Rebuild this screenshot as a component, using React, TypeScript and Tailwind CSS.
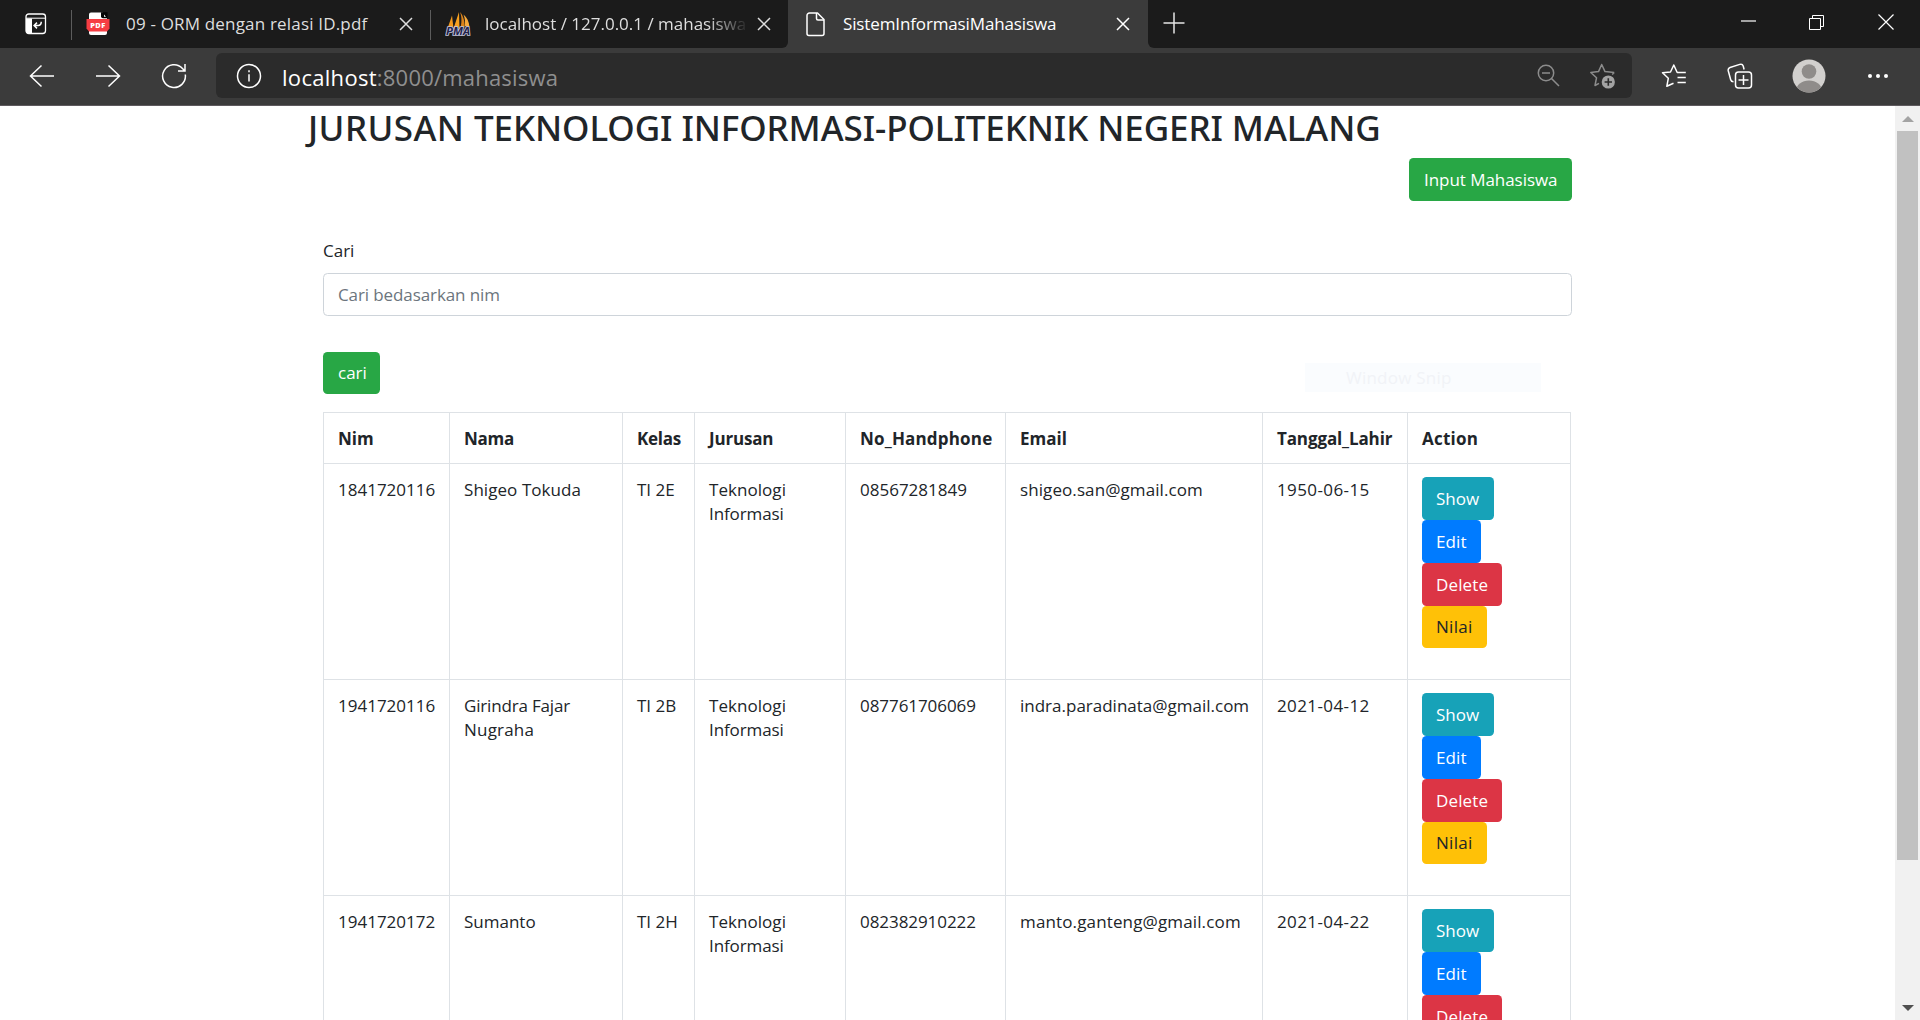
import type { ReactNode } from "react";

type Text = { text: string; track?: string };
type Student = {
  nim: Text;
  name: Text[];
  kelas: Text;
  phone: Text;
  email: Text;
  born: Text;
};

const students: Student[] = [
  {
    nim: { text: "1841720116" },
    name: [{ text: "Shigeo Tokuda", track: "tracking-[0.06px]" }],
    kelas: { text: "TI 2E" },
    phone: { text: "08567281849" },
    email: { text: "shigeo.san@gmail.com", track: "tracking-[0.09px]" },
    born: { text: "1950-06-15", track: "tracking-[0.4px]" },
  },
  {
    nim: { text: "1941720116" },
    name: [
      { text: "Girindra Fajar", track: "tracking-[-0.18px]" },
      { text: "Nugraha", track: "tracking-[0.2px]" },
    ],
    kelas: { text: "TI 2B" },
    phone: { text: "087761706069", track: "tracking-[-0.06px]" },
    email: { text: "indra.paradinata@gmail.com" },
    born: { text: "2021-04-12", track: "tracking-[0.4px]" },
  },
  {
    nim: { text: "1941720172" },
    name: [{ text: "Sumanto" }],
    kelas: { text: "TI 2H" },
    phone: { text: "082382910222", track: "tracking-[-0.06px]" },
    email: { text: "manto.ganteng@gmail.com", track: "tracking-[0.14px]" },
    born: { text: "2021-04-22", track: "tracking-[0.4px]" },
  },
];

const columns = [
  { label: "Nim", width: "w-[126px]", track: "" },
  { label: "Nama", width: "w-[173px]", track: "tracking-[-0.3px]" },
  { label: "Kelas", width: "w-[72px]", track: "tracking-[-0.25px]" },
  { label: "Jurusan", width: "w-[151px]", track: "tracking-[-0.2px]" },
  { label: "No_Handphone", width: "w-[160px]", track: "tracking-[0.18px]" },
  { label: "Email", width: "w-[257px]", track: "" },
  { label: "Tanggal_Lahir", width: "w-[145px]", track: "tracking-[-0.12px]" },
  { label: "Action", width: "w-[163px]", track: "tracking-[0.22px]" },
];

function CloseIcon({ className = "" }: { className?: string }) {
  return (
    <svg className={`size-[14px] shrink-0 ${className}`} viewBox="0 0 14 14" fill="none" stroke="currentColor" strokeWidth="1.5">
      <path d="M1 1l12 12M13 1L1 13" />
    </svg>
  );
}

function TabActionsIcon() {
  return (
    <svg className="size-[22px]" viewBox="0 0 22 22" fill="none">
      <rect x="1" y="1" width="19.5" height="19.5" rx="2.8" stroke="#fff" strokeWidth="1.3" />
      <path d="M1 5.200h19.500" stroke="#fff" strokeWidth="1" />
      <path d="M1 5.500h6v15H3.500A2.500 2.500 0 0 1 1 18z" fill="#fff" />
      <path d="M16.200 8.800v.7a3 3 0 0 1-3 3H9.500M12 9.600l-2.900 2.900 2.900 2.900" stroke="#fff" strokeWidth="1.500" />
    </svg>
  );
}

function PdfIcon() {
  return (
    <svg className="h-6 w-[24px] shrink-0" viewBox="0 0 24 24">
      <path d="M3 2.500A2 2 0 0 1 5 .5h11.500l4.500 5V21a2 2 0 0 1-2 2H5a2 2 0 0 1-2-2z" fill="#fff" />
      <path d="M15 .2h6.500v6H17a2 2 0 0 1-2-2z" fill="#050505" />
      <path d="M18 2.600l2 2.200h-2z" fill="#fff" />
      <path d="M.5 7h23v9.500L21 19.500H3L.5 16.500z" fill="#f63d43" />
      <text x="12" y="15.600" textAnchor="middle" fill="#fff" fontSize="7.400" fontWeight="800" letterSpacing="0.500" fontFamily="Open Sans, sans-serif">
        PDF
      </text>
    </svg>
  );
}

function PmaIcon() {
  return (
    <svg className="size-[26px] shrink-0" viewBox="0 0 26 26">
      <path d="M7 4.500L2.500 17.500h6z" fill="#f39a1e" />
      <path d="M14 1L8.500 17.500h6z" fill="#f8a11f" />
      <path d="M15 1c1.500 4 2 8 .8 14.800l3.700.7C20 11 18.500 5 15 1z" fill="#d9821a" />
      <path d="M18.500 3.500c3.500 3 5.500 7 6 12.500L19.800 15c.6-4 .2-7.500-1.300-11.500z" fill="#f6a93b" />
      <text
        x="13"
        y="24"
        textAnchor="middle"
        textLength="24"
        lengthAdjust="spacingAndGlyphs"
        fill="#22234a"
        stroke="#c4c5de"
        strokeWidth="1.600"
        paintOrder="stroke"
        fontSize="10"
        fontWeight="700"
        fontStyle="italic"
        fontFamily="Open Sans, sans-serif"
      >
        PMA
      </text>
    </svg>
  );
}

function PageIcon() {
  return (
    <svg className="h-[25px] w-5 shrink-0" viewBox="0 0 20 25" fill="none" stroke="#fff" strokeWidth="1.500" strokeLinejoin="round">
      <path d="M3.500 1h8l6.500 6.500V21.500A2 2 0 0 1 16 23.500H3A2 2 0 0 1 1 21.500V3.500A2.500 2.500 0 0 1 3.500 1z" />
      <path d="M10.500 1v5.500A1.500 1.500 0 0 0 12 8h6" />
    </svg>
  );
}

function TabStrip() {
  return (
    <div className="flex h-12 bg-[#3b3b3b] text-[17px] leading-[24px] text-[#dedede]">
      <div className="flex w-[788px] rounded-br-md bg-[#1b1b1b]">
        <div className="flex w-[71px] items-center pl-[25px]">
          <TabActionsIcon />
        </div>
        <div className="mt-[10px] h-[30px] w-px bg-[#5c5c5c]" />
        <div className="flex w-[358px] items-center pl-[14px]">
          <PdfIcon />
          <span className="ml-[16px] w-[273px] whitespace-nowrap tracking-[0.18px]">09 - ORM dengan relasi ID.pdf</span>
          <CloseIcon />
        </div>
        <div className="mt-[10px] h-[30px] w-px bg-[#5c5c5c]" />
        <div className="flex flex-1 items-center pl-[14px]">
          <PmaIcon />
          <span className="ml-[14px] w-[266px] whitespace-nowrap [mask-image:linear-gradient(to_right,black_222px,transparent_264px)]">
            localhost / 127.0.0.1 / mahasiswa
          </span>
          <CloseIcon className="ml-[6px]" />
        </div>
      </div>
      <div className="flex w-[360px] items-center pl-[18px] text-white">
        <PageIcon />
        <span className="ml-[17px] w-[273px] whitespace-nowrap tracking-[-0.13px]">SistemInformasiMahasiswa</span>
        <CloseIcon />
      </div>
      <div className="flex flex-1 items-center rounded-bl-md bg-[#1b1b1b] pl-[15px] text-white">
        <svg className="mb-[2px] size-[22px]" viewBox="0 0 22 22" stroke="#e6e6e6" strokeWidth="1.500">
          <path d="M11 .5v21M.5 11h21" />
        </svg>
        <div className="ml-auto flex items-center pr-[26px]">
          <svg className="mb-[7px] h-[2px] w-[15px]" viewBox="0 0 15 2">
            <path d="M0 1h15" stroke="#fff" strokeWidth="1.200" />
          </svg>
          <svg className="mb-[4px] ml-[53px] size-[16px]" viewBox="0 0 16 16" fill="none" stroke="#fff">
            <path d="M.5 4.500h11v11H.5zM3.500 4.500v-3h11v11h-3" />
          </svg>
          <svg className="mb-[4px] ml-[53px] size-[16px]" viewBox="0 0 16 16" fill="none" stroke="#fff" strokeWidth="1.200">
            <path d="M.5.5l15 15M15.500.5l-15 15" />
          </svg>
        </div>
      </div>
    </div>
  );
}

function Toolbar() {
  return (
    <div className="flex h-[58px] items-center border-b border-[#5e5a5e] bg-[#3b3b3b] pb-[2px] text-white">
      <svg className="ml-[29px] size-[26px]" viewBox="0 0 26 26" fill="none" stroke="#fff" strokeWidth="1.500">
        <path d="M25 13H1.500M12.500 2.500L1.500 13l11 10.500" />
      </svg>
      <svg className="ml-[40px] size-[26px]" viewBox="0 0 26 26" fill="none" stroke="#fff" strokeWidth="1.500">
        <path d="M1 13h23.500M13.500 2.500l11 10.500-11 10.500" />
      </svg>
      <svg className="ml-[40px] size-[26px]" viewBox="0 0 26 26" fill="none" stroke="#fff" strokeWidth="1.500">
        <path d="M24.300 11.500A11.400 11.400 0 1 1 21.500 5.500l2.300 2.500M24 1v7h-7" />
      </svg>
      <div className="ml-[29px] flex h-[45px] w-[1416px] items-center rounded-md bg-[#2b2b2b] pl-[20px] pr-[15px]">
        <svg className="size-[26px]" viewBox="0 0 26 26" fill="none" stroke="#fff" strokeWidth="1.500">
          <circle cx="13" cy="13" r="11.500" />
          <path d="M13 11.200v7.300M13 7.200v2" strokeWidth="1.500" />
        </svg>
        <div className="ml-[20px] whitespace-nowrap pt-[2px] text-[22px] leading-[30px]">
          <span className="tracking-[0.3px] text-white">localhost</span>
          <span className="tracking-[0.2px] text-[#8f8f8f]">:8000/mahasiswa</span>
        </div>
        <svg className="ml-auto size-[23px]" viewBox="0 0 23 23" fill="none" stroke="#8c8c8c" strokeWidth="1.500">
          <circle cx="9" cy="9" r="7.700" />
          <path d="M14.500 14.500l7.500 7.500M5 9h8" />
        </svg>
        <svg className="-mb-[3px] ml-[29px] h-[28px] w-[28px]" viewBox="0 0 28 28" fill="none">
          <path
            d="M25.200 9.500l-9.200-.9-3.300-7.100-3.200 7.100-7.700.9 5.700 5.300-1.500 7.700 4-2.200M25.200 9.500l-2 2"
            stroke="#8c8c8c"
            strokeWidth="1.500"
            strokeLinejoin="round"
          />
          <circle cx="19.300" cy="19" r="6.600" fill="#a3a3a3" />
          <path d="M19.300 15.300v7.400M15.600 19H23" stroke="#2b2b2b" strokeWidth="1.600" />
        </svg>
      </div>
      <svg className="ml-[29px] size-[26px]" viewBox="0 0 26 26" fill="none" stroke="#fff" strokeWidth="1.500" strokeLinejoin="round">
        <path d="M24.800 9.500h-8.600L12.800 2 9.500 9l-8 .8 5.800 5.500-1.500 8L12.500 20.200M16.500 14.500h8.300M16.500 19.500h8.300" />
      </svg>
      <svg className="ml-[40px] size-[26px]" viewBox="0 0 26 26" fill="none" stroke="#fff" strokeWidth="1.500" strokeLinejoin="round">
        <path d="M6.500 18.800C4.500 18.800 4 18 3.700 16.800L1.300 8C.9 6.300 1.500 5 3 4.500L12.800 1.400c1.700-.5 2.900.2 3.400 1.600l.9 3.500" />
        <rect x="8.500" y="9" width="16" height="16" rx="3" />
        <path d="M16.500 12v10M11.500 17h10" />
      </svg>
      <svg className="ml-[39px] size-[34px]" viewBox="0 0 34 34">
        <defs>
          <clipPath id="avatar-disc">
            <circle cx="17" cy="17" r="16.500" />
          </clipPath>
        </defs>
        <g clipPath="url(#avatar-disc)">
          <rect width="34" height="34" fill="#d2d0ce" />
          <circle cx="17" cy="12.500" r="7.300" fill="#8f8c8a" />
          <ellipse cx="17" cy="32" rx="13" ry="10.500" fill="#8f8c8a" />
        </g>
      </svg>
      <svg className="ml-[41px] h-[6px] w-[22px]" viewBox="0 0 22 6" fill="#fff">
        <circle cx="3" cy="3" r="2" />
        <circle cx="11" cy="3" r="2" />
        <circle cx="19" cy="3" r="2" />
      </svg>
    </div>
  );
}

function Button({ color, children }: { color: string; children: ReactNode }) {
  return <button className={`block rounded-[4.500px] whitespace-nowrap text-left leading-[24px] ${color}`}>{children}</button>;
}

function Cell({ children }: { children: ReactNode }) {
  return <td className="border-r border-b border-[#dee2e6] px-[14px] pt-[14px] align-top">{children}</td>;
}

function Label({ text, track = "" }: Text) {
  return <div className={`whitespace-nowrap ${track}`}>{text}</div>;
}

function StudentTable() {
  return (
    <table className="mt-[18px] w-[1248px] table-fixed border-separate border-spacing-0 border-t border-l border-[#dee2e6] leading-[24px]">
      <thead>
        <tr className="h-[51px]">
          {columns.map((c) => (
            <th key={c.label} className={`border-r border-b border-[#dee2e6] pt-[2px] pl-[14px] text-left align-middle font-bold whitespace-nowrap ${c.width} ${c.track}`}>
              {c.label}
            </th>
          ))}
        </tr>
      </thead>
      <tbody>
        {students.map((s) => (
          <tr key={s.nim.text} className="h-[216px]">
            <Cell><Label {...s.nim} /></Cell>
            <Cell>
              {s.name.map((n) => (
                <Label key={n.text} {...n} />
              ))}
            </Cell>
            <Cell><Label {...s.kelas} /></Cell>
            <Cell>
              <Label text="Teknologi" track="tracking-[0.05px]" />
              <Label text="Informasi" track="tracking-[-0.1px]" />
            </Cell>
            <Cell><Label {...s.phone} /></Cell>
            <Cell><Label {...s.email} /></Cell>
            <Cell><Label {...s.born} /></Cell>
            <Cell>
              <div className="-mt-px flex flex-col items-start">
                <Button color="h-[43px] w-[72px] bg-[#17a2b8] pl-[14px] text-white">Show</Button>
                <Button color="h-[43px] w-[59px] bg-[#007bff] pl-[14px] tracking-[0.12px] text-white">Edit</Button>
                <Button color="h-[43px] w-[80px] bg-[#dc3545] pl-[14px] tracking-[0.14px] text-white">Delete</Button>
                <Button color="h-[42px] w-[65px] bg-[#ffc107] pl-[14px] tracking-[0.3px] text-[#212529]">Nilai</Button>
              </div>
            </Cell>
          </tr>
        ))}
      </tbody>
    </table>
  );
}

function Scrollbar() {
  return (
    <div className="flex h-full w-[25px] flex-col items-center bg-[#f1f1f1]">
      <svg className="mt-[10px] h-[6px] w-3" viewBox="0 0 12 6">
        <path d="M0 6l6-6 6 6z" fill="#a3a3a3" />
      </svg>
      <div className="mt-[9px] h-[729px] w-[21px] bg-[#c1c1c1]" />
      <svg className="mt-auto mb-[9px] h-[6px] w-3" viewBox="0 0 12 6">
        <path d="M0 0h12L6 6z" fill="#505050" />
      </svg>
    </div>
  );
}

export default function App() {
  return (
    <div className="flex h-[1020px] w-[1920px] flex-col overflow-hidden bg-white font-['Open_Sans',sans-serif] text-[17px] text-[#212529]">
      <TabStrip />
      <Toolbar />
      <div className="flex min-h-0 flex-1">
        <main className="relative flex-1 pl-[323px]">
          <h2 className="-ml-[15px] h-[52px] whitespace-nowrap font-['Noto_Sans',sans-serif] text-[35px] leading-[44px] font-[550] tracking-[-0.08px]">
            <span className="tracking-[0.45px]">JURUSAN </span>TEKNOLOGI INFORMASI-POLITEKNIK NEGERI MALANG
          </h2>
          <div className="w-[1249px]">
            <div className="flex justify-end">
              <Button color="h-[43px] w-[163px] bg-[#28a745] pl-[15px] tracking-[-0.05px] text-white">Input Mahasiswa</Button>
            </div>
            <label className="mt-[38px] block leading-[24px]">Cari</label>
            <input
              className="mt-[10px] block h-[43px] w-full rounded-[4.500px] border border-[#ced4da] px-[14px] tracking-[-0.1px] placeholder:text-[#6c757d]"
              placeholder="Cari bedasarkan nim"
            />
            <div className="mt-[36px]">
              <Button color="h-[42px] w-[57px] bg-[#28a745] pl-[15px] text-white">cari</Button>
            </div>
            <StudentTable />
          </div>
          <div className="absolute top-[257px] left-[1305px] h-[29px] w-[236px] bg-[#fafcfe] pl-[41px] leading-[29px] tracking-[0.23px] text-[#f1f3f7]">
            Window Snip
          </div>
        </main>
        <Scrollbar />
      </div>
    </div>
  );
}
